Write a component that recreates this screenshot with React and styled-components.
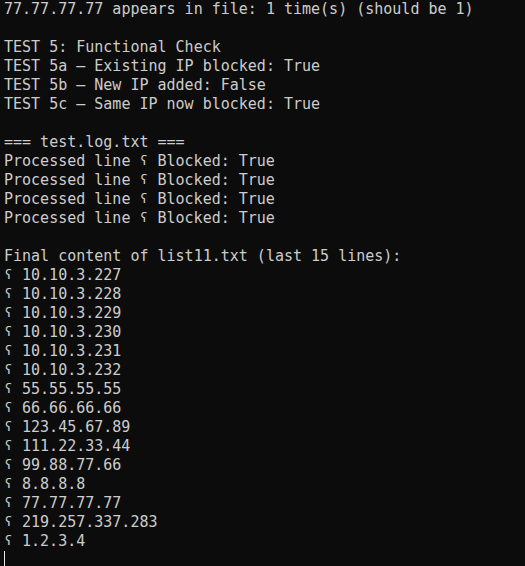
import React from 'react';
import styled, { createGlobalStyle } from 'styled-components';

const GlobalStyle = createGlobalStyle`
  html, body {
    margin: 0;
    padding: 0;
    background: #0c0c0c;
  }
`;

const header = [
  '77.77.77.77 appears in file: 1 time(s) (should be 1)',
  '',
  'TEST 5: Functional Check',
  'TEST 5a \u2013 Existing IP blocked: True',
  'TEST 5b \u2013 New IP added: False',
  'TEST 5c \u2013 Same IP now blocked: True',
  '',
  '=== test.log.txt ===',
];

const ips = [
  '10.10.3.227',
  '10.10.3.228',
  '10.10.3.229',
  '10.10.3.230',
  '10.10.3.231',
  '10.10.3.232',
  '55.55.55.55',
  '66.66.66.66',
  '123.45.67.89',
  '111.22.33.44',
  '99.88.77.66',
  '8.8.8.8',
  '77.77.77.77',
  '219.257.337.283',
  '1.2.3.4',
];

// the unknown char the console prints for the arrow
const Mark = () => <Glyph>{'\u0295'}</Glyph>;

export default function App() {
  return (
    <>
      <GlobalStyle />
      <Terminal>
        {header.map((l, i) => (
          <Line key={i}>{l}</Line>
        ))}
        {[0, 1, 2, 3].map((i) => (
          <Line key={'p' + i}>
            {'Processed line '}
            <Mark />
            {' Blocked: True'}
          </Line>
        ))}
        <Line />
        <Line>Final content of list11.txt (last 15 lines):</Line>
        {ips.map((ip) => (
          <Line key={ip}>
            <Mark />
            {' ' + ip}
          </Line>
        ))}
        <Line>
          <Cursor />
        </Line>
      </Terminal>
    </>
  );
}

const Terminal = styled.div`
  width: 525px;
  height: 566px;
  box-sizing: border-box;
  overflow: hidden;
  padding: 0 0 0 4px;
  background: #0c0c0c;
  color: #cccccc;
  font-family: 'DejaVu Sans Mono', 'Liberation Mono', monospace;
  font-size: 15px;
  display: flex;
  flex-direction: column;
`;

const Line = styled.div`
  flex-shrink: 0;
  height: 19px;
  line-height: 19px;
  white-space: pre;
  display: flex;
  align-items: center;
`;

const Glyph = styled.span`
  display: inline-block;
  width: 9px;
  font-size: 13px;
  text-align: center;
  line-height: 19px;
  position: relative;
  top: -1px;
`;

const Cursor = styled.span`
  width: 1px;
  height: 17px;
  background: #e8e8e8;
  align-self: flex-start;
`;
